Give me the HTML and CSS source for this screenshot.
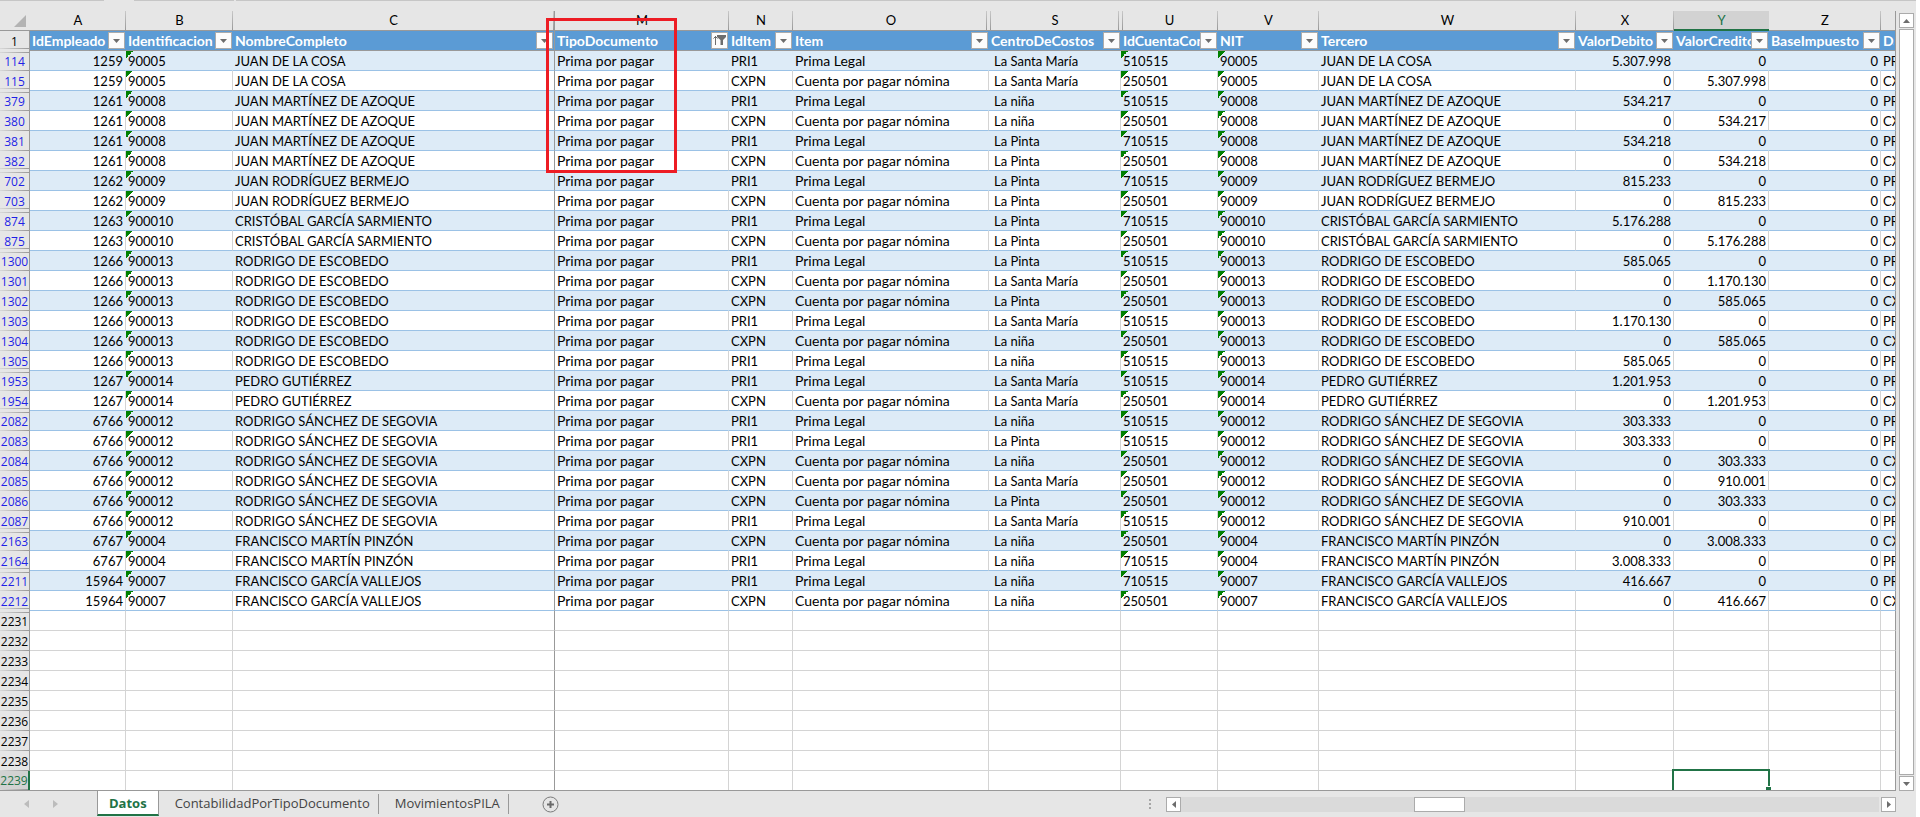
FILE: index.html
```html
<!DOCTYPE html>
<html lang="es">
<head>
<meta charset="utf-8">
<title>Datos</title>
<link rel="stylesheet" href="styles.css">
</head>
<body>
<div class="workbook">
  <div class="ribbon-edge"><span></span><span></span><span></span></div>
  <div class="main">
    <div class="sheet">
      <table class="grid">
        <colgroup>
          <col class="c-rownum"><col class="c-a"><col class="c-b"><col class="c-c"><col class="c-m"><col class="c-n"><col class="c-o"><col class="c-s"><col class="c-u"><col class="c-v"><col class="c-w"><col class="c-x"><col class="c-y"><col class="c-z"><col class="c-last">
        </colgroup>
        <thead>
          <tr class="letters">
            <th class="corner"><svg width="12" height="12" viewBox="0 0 12 12"><path d="M12 0v12H0z" fill="#b3b3b3"/></svg></th>
            <th>A</th><th>B</th><th class="freeze">C</th><th class="marked">M<span class="highlight"></span></th><th>N</th><th class="gap-right">O</th><th class="gap-left gap-right">S</th><th class="gap-left">U</th><th>V</th><th>W</th><th>X</th><th class="active">Y</th><th>Z</th><th class="last"></th>
          </tr>
          <tr class="titles" id="titles"><th class="rownum gap">1</th></tr>
        </thead>
        <tbody id="rows"></tbody>
      </table>
    </div>
    <div class="vscroll">
      <button class="scroll-btn" aria-label="Subir"><svg width="7" height="4" viewBox="0 0 7 4"><path d="M0 4 3.500 0 7 4z" fill="#6d6d6d"/></svg></button>
      <div class="vthumb"></div>
      <button class="scroll-btn" aria-label="Bajar"><svg width="7" height="4" viewBox="0 0 7 4"><path d="M0 0h7L3.500 4z" fill="#6d6d6d"/></svg></button>
    </div>
  </div>
  <div class="tabbar">
    <div class="tabnav">
      <button aria-label="Anterior"><svg width="5" height="8" viewBox="0 0 5 8"><path d="M5 0v8L0 4z" fill="#bcbcbc"/></svg></button>
      <button aria-label="Siguiente"><svg width="5" height="8" viewBox="0 0 5 8"><path d="M0 0v8l5-4z" fill="#bcbcbc"/></svg></button>
    </div>
    <button class="tab current">Datos</button>
    <button class="tab">ContabilidadPorTipoDocumento</button>
    <button class="tab">MovimientosPILA</button>
    <button class="add" aria-label="Nueva hoja"><svg width="17" height="17" viewBox="0 0 17 17"><circle cx="8.500" cy="8.500" r="7.500" fill="none" stroke="#7a7a7a"/><path d="M8.500 5v7M5 8.500h7" stroke="#6a6a6a" stroke-width="2"/></svg></button>
    <div class="hscroll">
      <svg class="grip" width="2" height="10" viewBox="0 0 2 10"><path d="M0 0h2v2H0zM0 4h2v2H0zM0 8h2v2H0z" fill="#a6a6a6"/></svg>
      <button class="scroll-btn" aria-label="Izquierda"><svg width="4" height="7" viewBox="0 0 4 7"><path d="M4 0v7L0 3.500z" fill="#6d6d6d"/></svg></button>
      <div class="htrack"><div class="hthumb"></div></div>
      <button class="scroll-btn" aria-label="Derecha"><svg width="4" height="7" viewBox="0 0 4 7"><path d="M0 0v7l4-3.500z" fill="#6d6d6d"/></svg></button>
    </div>
  </div>
</div>
<script src="grid.js"></script>
</body>
</html>
```
FILE: grid.js
```js
const titles = ['IdEmpleado', 'Identificacion', 'NombreCompleto', 'TipoDocumento', 'IdItem', 'Item',
  'CentroDeCostos', 'IdCuentaCon', 'NIT', 'Tercero', 'ValorDebito', 'ValorCredito', 'BaseImpuesto', 'Da'];

const people = {
  '90005': [1259, 'JUAN DE LA COSA'],
  '90008': [1261, 'JUAN MARTÍNEZ DE AZOQUE'],
  '90009': [1262, 'JUAN RODRÍGUEZ BERMEJO'],
  '900010': [1263, 'CRISTÓBAL GARCÍA SARMIENTO'],
  '900013': [1266, 'RODRIGO DE ESCOBEDO'],
  '900014': [1267, 'PEDRO GUTIÉRREZ'],
  '900012': [6766, 'RODRIGO SÁNCHEZ DE SEGOVIA'],
  '90004': [6767, 'FRANCISCO MARTÍN PINZÓN'],
  '90007': [15964, 'FRANCISCO GARCÍA VALLEJOS']
};

// row number, identification, item, cost centre, account, amount
const entries = [
  [114, '90005', 'PRI1', 'La Santa María', 510515, '5.307.998'],
  [115, '90005', 'CXPN', 'La Santa María', 250501, '5.307.998'],
  [379, '90008', 'PRI1', 'La niña', 510515, '534.217'],
  [380, '90008', 'CXPN', 'La niña', 250501, '534.217'],
  [381, '90008', 'PRI1', 'La Pinta', 710515, '534.218'],
  [382, '90008', 'CXPN', 'La Pinta', 250501, '534.218'],
  [702, '90009', 'PRI1', 'La Pinta', 710515, '815.233'],
  [703, '90009', 'CXPN', 'La Pinta', 250501, '815.233'],
  [874, '900010', 'PRI1', 'La Pinta', 710515, '5.176.288'],
  [875, '900010', 'CXPN', 'La Pinta', 250501, '5.176.288'],
  [1300, '900013', 'PRI1', 'La Pinta', 510515, '585.065'],
  [1301, '900013', 'CXPN', 'La Santa María', 250501, '1.170.130'],
  [1302, '900013', 'CXPN', 'La Pinta', 250501, '585.065'],
  [1303, '900013', 'PRI1', 'La Santa María', 510515, '1.170.130'],
  [1304, '900013', 'CXPN', 'La niña', 250501, '585.065'],
  [1305, '900013', 'PRI1', 'La niña', 510515, '585.065'],
  [1953, '900014', 'PRI1', 'La Santa María', 510515, '1.201.953'],
  [1954, '900014', 'CXPN', 'La Santa María', 250501, '1.201.953'],
  [2082, '900012', 'PRI1', 'La niña', 510515, '303.333'],
  [2083, '900012', 'PRI1', 'La Pinta', 510515, '303.333'],
  [2084, '900012', 'CXPN', 'La niña', 250501, '303.333'],
  [2085, '900012', 'CXPN', 'La Santa María', 250501, '910.001'],
  [2086, '900012', 'CXPN', 'La Pinta', 250501, '303.333'],
  [2087, '900012', 'PRI1', 'La Santa María', 510515, '910.001'],
  [2163, '90004', 'CXPN', 'La niña', 250501, '3.008.333'],
  [2164, '90004', 'PRI1', 'La niña', 710515, '3.008.333'],
  [2211, '90007', 'PRI1', 'La niña', 710515, '416.667'],
  [2212, '90007', 'CXPN', 'La niña', 250501, '416.667']
];

const arrow = '<svg width="7" height="4" viewBox="0 0 7 4"><path d="M0 0h7L3.500 4z" fill="#6d6d6d"/></svg>';
const funnel = '<svg width="13" height="11" viewBox="0 0 13 11"><path d="M2.500 1v9M.5 3.500l2-2 2 2" fill="none" stroke="#6d6d6d"/><path d="M4 0h9v2l-3 3v5H7.500V5L4 2z" fill="#6d6d6d"/></svg>';

document.getElementById('titles').innerHTML += titles.map((t, i) => {
  const icon = t === 'TipoDocumento' ? funnel : arrow;
  const button = t === 'Da' ? '' : `<button class="filter" aria-label="Filtrar ${t}">${icon}</button>`;
  return `<th class="${i === 2 ? 'freeze' : ''}"><div class="title"><span>${t}</span>${button}</div></th>`;
}).join('');

const classes = ['num', 'flag', 'freeze', 'text', '', 'text', 'indent', 'flag', 'flag', '', 'num', 'num', 'num', ''];
const cells = values => values.map((v, i) => `<td class="${classes[i]}">${v}</td>`).join('');

let html = '';
let previous = 1;
entries.forEach(([row, id, item, centre, account, amount], i) => {
  const next = i + 1 < entries.length ? entries[i + 1][0] : 2231;
  const [employee, name] = people[id];
  const debit = item === 'PRI1';
  const mark = (row - previous > 1 ? ' after' : '') + (next - row > 1 ? ' gap' : '');
  html += `<tr class="${i % 2 ? 'plain' : 'band'}"><th class="rownum filtered${mark}">${row}</th>` + cells([
    employee, id, name, 'Prima por pagar', item, debit ? 'Prima Legal' : 'Cuenta por pagar nómina',
    centre, account, id, name, debit ? amount : 0, debit ? 0 : amount, 0, debit ? 'PR' : 'CX'
  ]) + '</tr>';
  previous = row;
});
for (let row = 2231; row <= 2239; row++) {
  const last = row === 2239;
  html += `<tr class="empty"><th class="rownum${row === 2231 ? ' after' : ''}${last ? ' active' : ''}">${row}</th>` +
    classes.map((c, i) => `<td class="${i === 2 ? 'freeze' : ''}${last && i === 11 ? 'selected' : ''}"></td>`).join('') + '</tr>';
}
document.getElementById('rows').innerHTML = html;
```
FILE: styles.css
```css
* { box-sizing: border-box; }
body {
  margin: 0;
  background: #fff;
  font-family: Lato, "Liberation Sans", sans-serif;
  font-size: 13px;
  color: #000;
}
button { padding: 0; margin: 0; font: inherit; display: flex; align-items: center; justify-content: center; }
svg { display: block; flex: none; }
.workbook { display: flex; flex-direction: column; margin-right: 4px; min-height: 100vh; background: #e6e6e6; }
.ribbon-edge { display: flex; gap: 30px; height: 11px; }
.ribbon-edge span { height: 1px; background: #c6c6c6; width: 104px; }
.ribbon-edge span:nth-child(2) { width: 100px; }
.ribbon-edge span:nth-child(3) { flex: 1; margin-left: -28px; }
.main { display: flex; }
.sheet { flex: 1; min-width: 0; overflow: hidden; border-bottom: 1px solid #999; }

.grid { width: 100%; table-layout: fixed; border-collapse: separate; border-spacing: 0; }
.c-rownum { width: 30px; } .c-a { width: 96px; } .c-b { width: 107px; } .c-c { width: 322px; }
.c-m { width: 174px; } .c-n { width: 64px; } .c-o { width: 196px; } .c-s { width: 132px; }
.c-u { width: 97px; } .c-v { width: 101px; } .c-x { width: 98px; } .c-y { width: 95px; }
.c-z { width: 112px; } .c-last { width: 15px; }
.grid th, .grid td { height: 20px; padding: 0; line-height: 19px; white-space: nowrap; overflow: hidden; font-weight: 400; }

.letters th {
  border-bottom: 1px solid #999;
  background: linear-gradient(#c8c8c8, #999) right / 1px 100% no-repeat;
}
.letters .corner { background: none; padding: 4px 3px 3px 14px; }
.letters .marked { position: relative; overflow: visible; }
.highlight { position: absolute; top: 7px; left: -9px; width: 131px; height: 155px; border: 3px solid #ed1c24; }
.letters .gap-right { background-position: right 2px top; }
.letters .gap-left { background: linear-gradient(#c8c8c8, #999) 1px 0 / 1px 100% no-repeat, linear-gradient(#c8c8c8, #999) right / 1px 100% no-repeat; }
.letters .gap-left.gap-right { background-position: 1px 0, right 2px top; }
.letters .active { background: #d2d2d2; color: #217346; border-bottom: 2px solid #217346; line-height: 18px; }
.letters .last { background: none; }

.titles th { background: #5b9bd5; color: #fff; border-bottom: 1px solid #999; text-align: left; }
.title { display: flex; height: 19px; align-items: center; padding-right: 1px; font-size: 14px; font-weight: 700; }
.title span { flex: 1; overflow: hidden; padding-left: 2px; }
.filter { flex: none; width: 17px; height: 17px; border: 1px solid #ababab; background: #fcfcfc; }

.grid .rownum {
  background: linear-gradient(to right, #d8d8d8, #999) left bottom / 100% 1px no-repeat #e6e6e6;
  color: #000;
  text-align: center;
  border-right: 1px solid #999;
  border-bottom: 0;
  font-family: "Open Sans", sans-serif;
  font-size: 12px;
}
.grid .filtered { color: #1f1fe6; }
.grid .gap { background-position: left bottom 2px; }
.grid .after { background-image: linear-gradient(to right, #d8d8d8, #999), linear-gradient(to right, #d8d8d8, #999); background-size: 100% 1px, 100% 1px; background-position: 0 1px, left bottom; }
.grid .after.gap { background-position: 0 1px, left bottom 2px; }
.grid .rownum.active { background-color: #d2d2d2; color: #217346; border-right: 2px solid #217346; }

.grid td { background: #fff; border-right: 1px solid #d4d4d4; border-bottom: 1px solid #d4d4d4; padding: 2px 2px 0; line-height: 17px; }
.grid .plain td { border-bottom-color: #9bc2e6; }
.grid .band td { background-color: #ddebf7; border-right-color: #ddebf7; border-bottom-color: #9bc2e6; }
.grid .num { text-align: right; }
.grid .text { font-size: 14px; padding: 1px 2px; }
.grid .indent { padding-left: 5px; }
.grid td.flag { background-image: linear-gradient(135deg, #008000 50%, transparent 50%); background-size: 7px 7px; background-repeat: no-repeat; }
.grid th.freeze, .grid tr td.freeze { border-right: 1px solid #999; }
.grid tr > :last-child { border-right: 1px solid #999; }
.grid .empty:last-child td, .grid .empty:last-child th { height: 19px; border-bottom: 0; }
.grid .empty td.selected { position: relative; overflow: visible; }
.selected::before { content: ""; position: absolute; inset: -2px -2px 0 -2px; border: 2px solid #217346; border-bottom: 0; }
.selected::after { content: ""; position: absolute; right: -3px; bottom: 0; width: 5px; height: 3px; background: #217346; border-top: 1px solid #fff; }

.vscroll { width: 20px; padding: 2px 1px 0 3px; display: flex; flex-direction: column; }
.scroll-btn { flex: none; width: 15px; height: 15px; background: #fff; border: 1px solid #ababab; }
.vthumb { flex: 1; width: 15px; margin: 1px 0; background: #fff; border: 1px solid #ababab; }

.tabbar { flex: 1; display: flex; align-items: flex-start; min-height: 26px; padding-right: 20px; }
.tabnav { display: flex; gap: 24px; width: 97px; padding: 9px 0 0 24px; }
.tabnav button, .add { border: 0; background: none; }
.tab { height: 20px; margin-top: 3px; padding: 0 8px 3px 16px; border: 0; border-right: 1px solid #999; background: none; color: #444; font-family: "Open Sans", sans-serif; font-size: 13px; }
.tab.current { height: 25px; margin-top: 0; padding: 0 11px; background: #fff; color: #217346; font-weight: 700; border: solid #999; border-width: 0 1px; border-bottom: 2px solid #217346; }
.add { margin: 5px 0 0 33px; }
.hscroll { flex: none; display: flex; width: 747px; margin: 6px 0 0 auto; }
.grip { margin: 2px 15px 0 0; }
.htrack { flex: 1; height: 15px; margin-right: 2px; background: #dadada; display: flex; padding-left: 233px; }
.hthumb { width: 51px; height: 15px; background: #fff; border: 1px solid #ababab; }
```
